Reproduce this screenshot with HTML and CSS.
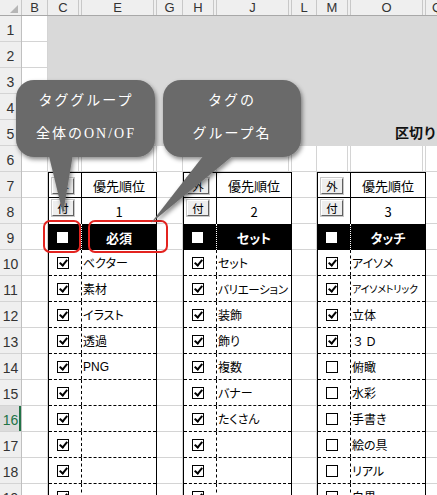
FILE: index.html
```html
<!DOCTYPE html>
<html lang="ja">
<head>
<meta charset="utf-8">
<link rel="stylesheet" href="styles.css">
</head>
<body>
<div class="app">
  <div class="colhead">
    <div class="corner"><span class="tri"></span></div>
    <div class="ch w26">B</div>
    <div class="ch w31">C</div>
    <div class="ch w3"></div>
    <div class="ch w72">E</div>
    <div class="ch w3"></div>
    <div class="ch w26">G</div>
    <div class="ch w31">H</div>
    <div class="ch w3"></div>
    <div class="ch w72">J</div>
    <div class="ch w3"></div>
    <div class="ch w25">L</div>
    <div class="ch w31">M</div>
    <div class="ch w3"></div>
    <div class="ch w72">O</div>
    <div class="ch w3"></div>
    <div class="ch grow">Q</div>
  </div>
  <div class="main">
    <div class="rowhead">
      <div class="rn">1</div><div class="rn">2</div><div class="rn">3</div><div class="rn">4</div>
      <div class="rn">5</div><div class="rn">6</div><div class="rn">7</div><div class="rn">8</div>
      <div class="rn">9</div><div class="rn">10</div><div class="rn">11</div><div class="rn">12</div>
      <div class="rn">13</div><div class="rn">14</div><div class="rn">15</div><div class="rn sel">16</div>
      <div class="rn">17</div><div class="rn">18</div><div class="rn">19</div>
    </div>
    <div class="sheet">
      <div class="banner"><span class="kugiri">区切り</span></div>

      <div class="tbl t1">
        <div class="tr r7"><div class="c1"><span class="btn lo">外</span></div><div class="c2 hd">優先順位</div></div>
        <div class="tr r8"><div class="c1"><span class="btn hi">付</span></div><div class="c2 hd">1</div></div>
        <div class="tr r9"><div class="c1"><span class="sq"></span></div><div class="c2">必須</div></div>
        <div class="tr rd"><div class="c1"><span class="cb on"></span></div><div class="c2">ベクター</div></div>
        <div class="tr rd"><div class="c1"><span class="cb on"></span></div><div class="c2">素材</div></div>
        <div class="tr rd"><div class="c1"><span class="cb on"></span></div><div class="c2">イラスト</div></div>
        <div class="tr rd"><div class="c1"><span class="cb on"></span></div><div class="c2">透過</div></div>
        <div class="tr rd"><div class="c1"><span class="cb on"></span></div><div class="c2 lat">PNG</div></div>
        <div class="tr rd"><div class="c1"><span class="cb on"></span></div><div class="c2"></div></div>
        <div class="tr rd"><div class="c1"><span class="cb on"></span></div><div class="c2"></div></div>
        <div class="tr rd"><div class="c1"><span class="cb on"></span></div><div class="c2"></div></div>
        <div class="tr rd"><div class="c1"><span class="cb on"></span></div><div class="c2"></div></div>
        <div class="tr rd"><div class="c1"><span class="cb on"></span></div><div class="c2"></div></div>
      </div>

      <div class="tbl t2">
        <div class="tr r7"><div class="c1"><span class="btn lo">外</span></div><div class="c2 hd">優先順位</div></div>
        <div class="tr r8"><div class="c1"><span class="btn hi">付</span></div><div class="c2 hd">2</div></div>
        <div class="tr r9"><div class="c1"><span class="sq"></span></div><div class="c2">セット</div></div>
        <div class="tr rd"><div class="c1"><span class="cb on"></span></div><div class="c2">セット</div></div>
        <div class="tr rd"><div class="c1"><span class="cb on"></span></div><div class="c2 sm">バリエーション</div></div>
        <div class="tr rd"><div class="c1"><span class="cb on"></span></div><div class="c2">装飾</div></div>
        <div class="tr rd"><div class="c1"><span class="cb on"></span></div><div class="c2">飾り</div></div>
        <div class="tr rd"><div class="c1"><span class="cb on"></span></div><div class="c2">複数</div></div>
        <div class="tr rd"><div class="c1"><span class="cb on"></span></div><div class="c2">バナー</div></div>
        <div class="tr rd"><div class="c1"><span class="cb on"></span></div><div class="c2">たくさん</div></div>
        <div class="tr rd"><div class="c1"><span class="cb on"></span></div><div class="c2"></div></div>
        <div class="tr rd"><div class="c1"><span class="cb on"></span></div><div class="c2"></div></div>
        <div class="tr rd"><div class="c1"><span class="cb on"></span></div><div class="c2"></div></div>
      </div>

      <div class="tbl t3">
        <div class="tr r7"><div class="c1"><span class="btn lo">外</span></div><div class="c2 hd">優先順位</div></div>
        <div class="tr r8"><div class="c1"><span class="btn hi">付</span></div><div class="c2 hd">3</div></div>
        <div class="tr r9"><div class="c1"><span class="sq"></span></div><div class="c2">タッチ</div></div>
        <div class="tr rd"><div class="c1"><span class="cb on"></span></div><div class="c2">アイソメ</div></div>
        <div class="tr rd"><div class="c1"><span class="cb on"></span></div><div class="c2 xs">アイソメトリック</div></div>
        <div class="tr rd"><div class="c1"><span class="cb on"></span></div><div class="c2">立体</div></div>
        <div class="tr rd"><div class="c1"><span class="cb on"></span></div><div class="c2 fw">３Ｄ</div></div>
        <div class="tr rd"><div class="c1"><span class="cb"></span></div><div class="c2">俯瞰</div></div>
        <div class="tr rd"><div class="c1"><span class="cb"></span></div><div class="c2">水彩</div></div>
        <div class="tr rd"><div class="c1"><span class="cb"></span></div><div class="c2">手書き</div></div>
        <div class="tr rd"><div class="c1"><span class="cb"></span></div><div class="c2">絵の具</div></div>
        <div class="tr rd"><div class="c1"><span class="cb"></span></div><div class="c2">リアル</div></div>
        <div class="tr rd"><div class="c1"><span class="cb"></span></div><div class="c2">白黒</div></div>
      </div>
    </div>
  </div>

  <svg class="overlay" width="437" height="495" viewBox="0 0 437 495">
    <defs>
      <filter id="sh" x="-20%" y="-20%" width="140%" height="140%">
        <feDropShadow dx="1.5" dy="2.5" stdDeviation="2.2" flood-color="#000" flood-opacity="0.45"/>
      </filter>
    </defs>
    <rect class="red" x="44" y="221" width="36" height="31" rx="6"/>
    <rect class="red" x="89" y="221" width="78" height="31" rx="6"/>
    <g filter="url(#sh)" fill="#6b6b6b">
      <rect x="16" y="80" width="139" height="77" rx="18"/>
      <polygon points="47.5,150 73.7,150 63,214"/>
      <rect x="163" y="80" width="138" height="77" rx="18"/>
      <polygon points="207.8,150 240,150 151,223"/>
    </g>
    <g class="ctext">
      <text x="86" y="105">タググループ</text>
      <text x="86" y="138">全体のON/OF</text>
      <text x="232" y="105">タグの</text>
      <text x="232" y="138">グループ名</text>
    </g>
  </svg>
</div>
</body>
</html>
```
FILE: styles.css
```css
body {
  margin: 0;
}

.app {
  position: relative;
  width: 437px;
  height: 495px;
  overflow: hidden;
  background: #fff;
  font-family: "Noto Sans CJK JP", sans-serif;
}

/* column header */
.colhead {
  display: flex;
  height: 16px;
  background: #efefef;
  border-bottom: 1px solid #a8a8a8;
  box-sizing: border-box;
}

.corner {
  position: relative;
  flex: none;
  width: 22px;
  box-sizing: border-box;
  border-right: 1px solid #c8c8c8;
}

.tri {
  position: absolute;
  right: 3px;
  bottom: 2px;
  width: 0;
  height: 0;
  border-left: 8px solid transparent;
  border-bottom: 8px solid #b6b6b6;
}

.ch {
  flex: none;
  box-sizing: border-box;
  border-right: 1px solid #c8c8c8;
  font: 13px/15px "Liberation Sans", Arial, sans-serif;
  color: #333;
  text-align: center;
  overflow: hidden;
}

.w3 { width: 3px; }
.w25 { width: 25px; }
.w26 { width: 26px; }
.w31 { width: 31px; }
.w72 { width: 72px; }
.grow { flex: 1; border-right: none; text-align: left; padding-left: 6px; }

/* body */
.main {
  display: flex;
}

.rowhead {
  flex: none;
  width: 22px;
  background: #efefef;
  border-right: 1px solid #c0c0c0;
  box-sizing: border-box;
}

.rn {
  height: 26px;
  box-sizing: border-box;
  border-bottom: 1px solid #d4d4d4;
  font: 14px/28px "Liberation Sans", Arial, sans-serif;
  color: #333;
  text-align: center;
}

.rn.sel {
  color: #217346;
  background: #dcdcdc;
  box-shadow: inset -2px 0 0 #217346;
}

.sheet {
  flex: 1;
  display: grid;
  grid-template-columns: 26px 109px 26px 109px 25px 109px 1fr;
  grid-template-rows: repeat(19, 26px);
  background-color: #fff;
  background-image:
    linear-gradient(#d4d4d4, #d4d4d4),
    linear-gradient(#d4d4d4, #d4d4d4),
    linear-gradient(#d4d4d4, #d4d4d4),
    linear-gradient(#d4d4d4, #d4d4d4),
    linear-gradient(#d4d4d4, #d4d4d4),
    linear-gradient(#d4d4d4, #d4d4d4),
    linear-gradient(#d4d4d4, #d4d4d4),
    linear-gradient(#d4d4d4, #d4d4d4),
    linear-gradient(#d4d4d4, #d4d4d4),
    linear-gradient(#d4d4d4, #d4d4d4),
    linear-gradient(#d4d4d4, #d4d4d4),
    linear-gradient(#d4d4d4, #d4d4d4),
    linear-gradient(#d4d4d4, #d4d4d4),
    linear-gradient(#d4d4d4, #d4d4d4),
    linear-gradient(#d4d4d4, #d4d4d4),
    repeating-linear-gradient(to bottom, transparent 0 25px, #d4d4d4 25px 26px);
  background-size:
    1px 100%, 1px 100%, 1px 100%, 1px 100%, 1px 100%,
    1px 100%, 1px 100%, 1px 100%, 1px 100%, 1px 100%,
    1px 100%, 1px 100%, 1px 100%, 1px 100%, 1px 100%,
    100% 100%;
  background-position:
    25px 0, 56px 0, 59px 0, 131px 0, 134px 0,
    160px 0, 191px 0, 194px 0, 266px 0, 269px 0,
    294px 0, 325px 0, 328px 0, 400px 0, 403px 0,
    0 0;
  background-repeat: no-repeat;
}

.banner {
  grid-column: 2 / -1;
  grid-row: 1 / 6;
  background: #d9d9d9;
  display: flex;
  align-items: flex-end;
  padding: 0 0 5px 347px;
  box-sizing: border-box;
  overflow: hidden;
}

.kugiri {
  font-weight: bold;
  font-size: 14px;
  line-height: 17px;
  white-space: nowrap;
  color: #111;
}

/* tables */
.tbl {
  grid-row: 7 / span 13;
  display: flex;
  flex-direction: column;
  background: #fff;
  border: 1px solid #000;
  border-bottom: none;
  overflow: hidden;
}

.t1 { grid-column: 2; }
.t2 { grid-column: 4; }
.t3 { grid-column: 6; }

.tr {
  flex: none;
  display: grid;
  grid-template-columns: 33px 1fr;
  height: 26px;
  box-sizing: border-box;
}

.c1 {
  display: flex;
  align-items: center;
  padding-left: 8px;
  box-sizing: border-box;
  border-right: 1px solid #000;
}

.c2 {
  display: flex;
  align-items: center;
  padding-left: 1px;
  font-size: 12px;
  color: #000;
  white-space: nowrap;
  overflow: hidden;
  font-feature-settings: "palt";
}

.r7 {
  height: 25px;
  border-bottom: 1px solid #000;
}

.r7 .c1,
.r8 .c1 {
  padding-left: 3px;
}

.c2.hd {
  justify-content: center;
  padding-left: 0;
  font-size: 13px;
}

.r9 {
  background: #000;
}

.r9 .c1 {
  border-right: 1px dotted #fff;
}

.r9 .c2 {
  justify-content: center;
  padding-left: 0;
  color: #fff;
  font-weight: bold;
  font-size: 13px;
}

.rd {
  border-bottom: 1px dashed #000;
}

.rd .c1 {
  border-right: 1px dashed #000;
}

.c2.sm { font-size: 11.5px; letter-spacing: -0.3px; }
.c2.xs { font-size: 10px; letter-spacing: -0.2px; }
.c2.lat { font-family: "Liberation Sans", Arial, sans-serif; font-size: 12px; }
.c2.fw { font-feature-settings: normal; letter-spacing: 1px; }

.btn {
  display: block;
  width: 22px;
  height: 16px;
  box-sizing: border-box;
  background: #eeeeee;
  border: 1px solid;
  border-color: #ffffff #5f5f5f #5f5f5f #ffffff;
  box-shadow: 0 0 0 1px #c8c8c8;
  font-size: 11.5px;
  line-height: 14px;
  text-align: center;
  color: #000;
}

.btn.lo {
  align-self: flex-end;
  margin-bottom: 3px;
}

.btn.hi {
  align-self: flex-start;
  margin-top: 2px;
}

.sq {
  display: block;
  width: 11px;
  height: 11px;
  background: #fff;
}

.cb {
  position: relative;
  display: block;
  width: 12px;
  height: 12px;
  box-sizing: border-box;
  border: 1px solid #000;
  background: #fff;
}

.cb.on::after {
  content: "";
  position: absolute;
  left: 3px;
  top: 0px;
  width: 3px;
  height: 6px;
  border: solid #000;
  border-width: 0 2px 2px 0;
  transform: rotate(40deg);
}

/* overlays */
.overlay {
  position: absolute;
  left: 0;
  top: 0;
  pointer-events: none;
}

.red {
  fill: none;
  stroke: #e3231f;
  stroke-width: 2;
}

.ctext text {
  fill: #fff;
  font-family: "Liberation Serif", "Noto Sans CJK JP", serif;
  font-size: 14px;
  letter-spacing: 2px;
  text-anchor: middle;
}
```
